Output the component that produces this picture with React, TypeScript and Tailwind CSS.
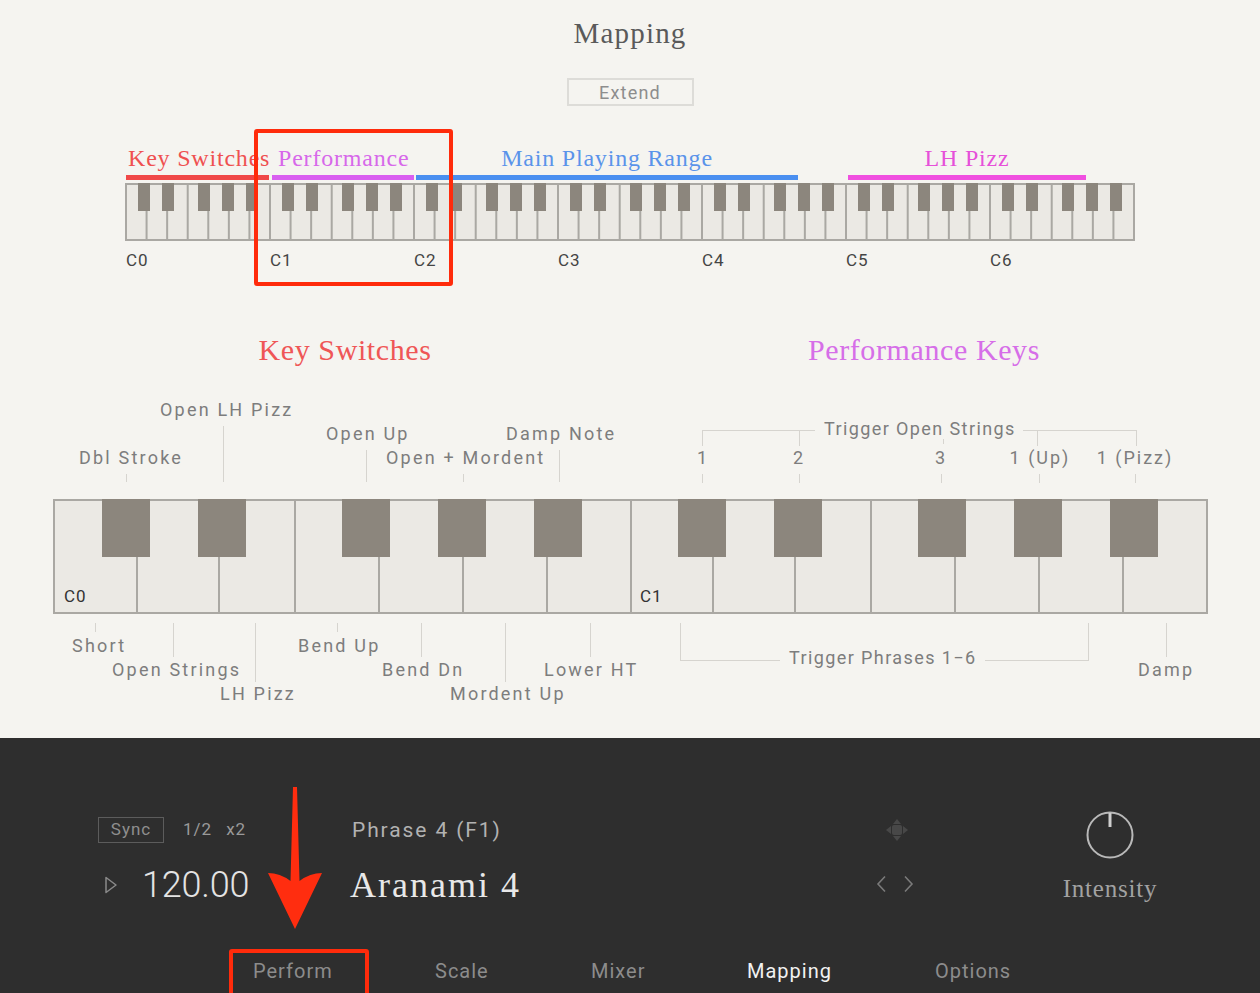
import React from 'react';

// Mapping page of the instrument: two keyboard maps on a light panel, transport/perform strip below.

const SANS = "font-['Roboto',sans-serif]";
const SERIF = "font-['Liberation_Serif',serif]";

// lower diagram origin on the page
const OX = 53;
const OY = 396;

type Label = { t: string; x: number; y: number; wide?: boolean };

const annotations: Label[] = [
  { t: 'Open LH Pizz', x: 160, y: 410, wide: true },
  { t: 'Dbl Stroke', x: 79, y: 458, wide: true },
  { t: 'Open Up', x: 326, y: 434, wide: true },
  { t: 'Damp Note', x: 506, y: 434, wide: true },
  { t: 'Open + Mordent', x: 386, y: 458, wide: true },
  { t: 'Trigger Open Strings', x: 824, y: 429 },
  { t: 'Short', x: 72, y: 646, wide: true },
  { t: 'Open Strings', x: 112, y: 670, wide: true },
  { t: 'LH Pizz', x: 220, y: 694, wide: true },
  { t: 'Bend Up', x: 298, y: 646, wide: true },
  { t: 'Bend Dn', x: 382, y: 670, wide: true },
  { t: 'Mordent Up', x: 450, y: 694, wide: true },
  { t: 'Lower HT', x: 544, y: 670, wide: true },
  { t: 'Trigger Phrases 1−6', x: 789, y: 658 },
  { t: 'Damp', x: 1138, y: 670, wide: true },
];

const numberLabels = [
  { t: '1', c: 703 },
  { t: '2', c: 799 },
  { t: '3', c: 941 },
  { t: '1 (Up)', c: 1040 },
  { t: '1 (Pizz)', c: 1135 },
];

// [x, y1, y2]
const vLines: [number, number, number][] = [
  [126, 474, 482], [223, 426, 482], [366, 450, 482], [463, 474, 482], [559, 450, 482],
  [702, 474, 483], [799, 474, 483], [941, 474, 483], [1039, 474, 483], [1135, 474, 483],
  [943, 439, 444],
  [702, 430, 446], [799, 430, 446], [1037, 430, 446], [1136, 430, 446],
  [95, 623, 632], [173, 623, 657], [255, 623, 682], [337, 623, 632], [421, 623, 657],
  [505, 623, 682], [590, 623, 657], [1166, 623, 657], [680, 623, 660], [1088, 623, 660],
];

// [y, x1, x2]
const hLines: [number, number, number][] = [
  [430, 702, 815], [430, 1023, 1137], [660, 680, 780], [660, 985, 1089],
];

// zones over the overview keyboard
const zones = [
  { name: 'Key Switches', w: 'w-[143px]', ml: 'ml-[1px]', text: 'pl-[2px] text-[#ef5050]', bar: 'bg-[#f04848]' },
  { name: 'Performance', w: 'w-[142px]', ml: 'ml-[3px]', text: 'pl-[6px] text-[#d768ea]', bar: 'bg-[#d95ff0]' },
  { name: 'Main Playing Range', w: 'w-[382px]', ml: 'ml-[2px]', text: 'text-center text-[#5a93ea]', bar: 'bg-[#4a8ff0]' },
  { name: 'LH Pizz', w: 'w-[238px]', ml: 'ml-[50px]', text: 'text-center text-[#e650d9]', bar: 'bg-[#f050e0]' },
];

const tabs = [
  { name: 'Perform', w: 'w-[182px]', active: false },
  { name: 'Scale', w: 'w-[156px]', active: false },
  { name: 'Mixer', w: 'w-[156px]', active: false },
  { name: 'Mapping', w: 'w-[188px]', active: true },
  { name: 'Options', w: 'w-[120px]', active: false },
];

const TopKeyboard = () => {
  const ww = 144 / 7;
  const blacks = [12, 36, 72, 96, 120];
  return (
    <svg width="1012" height="58" className="block">
      <rect x="1" y="1" width="1008" height="56" fill="#ebe9e4" stroke="#aaa8a3" strokeWidth="2" />
      {Array.from({ length: 48 }, (_, i) => (
        <line key={i} x1={1 + (i + 1) * ww} x2={1 + (i + 1) * ww} y1="1" y2="57" stroke="#aaa8a3" strokeWidth="2" />
      ))}
      {Array.from({ length: 7 }, (_, o) =>
        blacks.map((b) => <rect key={`${o}-${b}`} x={1 + o * 144 + b} y="0" width="12" height="28" fill="#8c867d" />)
      )}
    </svg>
  );
};

const BigKeyboard = () => {
  const seps = [137, 219, 295, 379, 463, 547, 631, 713, 795, 871, 955, 1039, 1123];
  const blacks = [102, 198, 342, 438, 534, 678, 774, 918, 1014, 1110];
  return (
    <svg width="1156" height="116" className="block">
      <rect x="1" y="1" width="1153" height="113" fill="#ebe9e4" stroke="#aaa8a3" strokeWidth="2" />
      {seps.map((x) => (
        <line key={x} x1={x - OX} x2={x - OX} y1="1" y2="114" stroke="#aaa8a3" strokeWidth="2" />
      ))}
      {blacks.map((x) => (
        <rect key={x} x={x - OX} y="0" width="48" height="58" fill="#8c867d" />
      ))}
    </svg>
  );
};

export default function App() {
  return (
    <div className="relative h-[993px] w-[1260px] overflow-hidden bg-[#f5f4f0]">
      {/* light mapping panel */}
      <div className="h-[738px] bg-[#f5f4f0] pt-[16px]">
        <div className={`${SERIF} h-[34px] text-center text-[29px] leading-[34px] tracking-[1.2px] text-[#5a5a5a]`}>Mapping</div>
        <div
          className={`${SANS} mx-auto mt-[28px] flex h-[28px] w-[127px] items-center justify-center border-2 border-[#dddcd8] text-[18px] tracking-[1.2px] text-[#8d8d8d]`}
        >
          Extend
        </div>

        {/* overview keyboard */}
        <div className="ml-[125px] mt-[38px] flex w-[1012px] flex-col">
          <div className={`${SERIF} flex text-[24px] leading-[28px] tracking-[0.8px]`}>
            {zones.map((z) => (
              <div key={z.name} className={`${z.w} ${z.ml} flex flex-col`}>
                <span className={`${z.text} whitespace-nowrap`}>{z.name}</span>
                <div className={`mt-[3px] h-[5px] ${z.bar}`} />
              </div>
            ))}
          </div>
          <div className="mt-[3px]">
            <TopKeyboard />
          </div>
          <div className={`${SANS} mt-[9px] flex pl-[1px] text-[17px] leading-[20px] tracking-[1px] text-[#444]`}>
            {['C0', 'C1', 'C2', 'C3', 'C4', 'C5', 'C6'].map((c) => (
              <span key={c} className="w-[144px]">
                {c}
              </span>
            ))}
          </div>
        </div>

        {/* section headings */}
        <div className={`${SERIF} mt-[62px] flex h-[36px] text-[30px] leading-[36px] tracking-[0.6px]`}>
          <div className="w-[690px] text-center text-[#ef5656]">Key Switches</div>
          <div className="w-[468px] text-center text-[#d66ee8]">Performance Keys</div>
        </div>

        {/* detailed keyboard with annotations */}
        <div className={`${SANS} relative ml-[53px] mt-[28px] h-[314px] w-[1160px] text-[18px] leading-[22px] text-[#7d7d7d]`}>
          {annotations.map((l) => (
            <span
              key={l.t}
              className={`absolute whitespace-nowrap ${l.wide ? 'tracking-[2.2px]' : 'tracking-[1.4px]'}`}
              style={{ left: l.x - OX, top: l.y - OY - 11 }}
            >
              {l.t}
            </span>
          ))}
          {numberLabels.map((l) => (
            <span
              key={l.t}
              className="absolute -translate-x-1/2 whitespace-nowrap tracking-[2px]"
              style={{ left: l.c - OX, top: 458 - OY - 11 }}
            >
              {l.t}
            </span>
          ))}
          {vLines.map(([x, y1, y2], i) => (
            <div key={`v${i}`} className="absolute w-px bg-[#d6d4cf]" style={{ left: x - OX, top: y1 - OY, height: y2 - y1 }} />
          ))}
          {hLines.map(([y, x1, x2], i) => (
            <div key={`h${i}`} className="absolute h-px bg-[#d6d4cf]" style={{ left: x1 - OX, top: y - OY, width: x2 - x1 }} />
          ))}

          <div className="absolute left-0 top-[103px]">
            <BigKeyboard />
          </div>
          <span className="absolute left-[11px] top-[190px] text-[17px] leading-[20px] tracking-[1px] text-[#333]">C0</span>
          <span className="absolute left-[587px] top-[190px] text-[17px] leading-[20px] tracking-[1px] text-[#333]">C1</span>
        </div>
      </div>

      {/* dark perform strip */}
      <div className={`${SANS} flex h-[255px] flex-col bg-[#2e2e2e]`}>
        <div className="flex pt-[74px]">
          <div className="ml-[98px] w-[252px] pt-[5px]">
            <div className="flex h-[26px] items-center text-[17px] tracking-[1px] text-[#9a9a9a]">
              <span className="flex h-[26px] w-[66px] items-center justify-center border border-[#5c5c5c] text-[#8e8e8e]">Sync</span>
              <span className="ml-[19px]">1/2</span>
              <span className="ml-[14px]">x2</span>
            </div>
            <div className="mt-[20px] flex h-[44px] items-center">
              <svg width="14" height="18" viewBox="0 0 14 18" className="ml-[6px]">
                <path d="M2 1.5 L12 9 L2 16.5 Z" fill="none" stroke="#8a8a8a" strokeWidth="1.5" strokeLinejoin="round" />
              </svg>
              <span className="ml-[24px] text-[36px] font-light leading-[44px] tracking-[-0.2px] text-[#e4e4e4]">120.00</span>
            </div>
          </div>

          <div className="w-[480px] pt-[5px]">
            <div className="ml-[2px] h-[26px] text-[21px] leading-[26px] tracking-[1.9px] text-[#b2b2b2]">Phrase 4 (F1)</div>
            <div className={`${SERIF} mt-[20px] h-[44px] text-[36px] leading-[44px] tracking-[2px] text-[#e8e8e8]`}>Aranami 4</div>
          </div>

          <div className="flex w-[134px] flex-col items-center pt-[5px]">
            <svg width="26" height="26" viewBox="0 0 26 26">
              <g fill="#484848">
                <rect x="8" y="8" width="10" height="10" rx="2" />
                <path d="M13 2 L9 7 L17 7 Z" />
                <path d="M13 24 L9 19 L17 19 Z" />
                <path d="M2 13 L7 9 L7 17 Z" />
                <path d="M24 13 L19 9 L19 17 Z" />
              </g>
            </svg>
            <svg width="44" height="18" viewBox="0 0 44 18" className="mt-[32px]">
              <g fill="none" stroke="#7a7a7a" strokeWidth="1.6">
                <path d="M10 1.5 L3 9 L10 16.5" />
                <path d="M30 1.5 L37 9 L30 16.5" />
              </g>
            </svg>
          </div>

          <div className="flex w-[292px] flex-col items-center">
            <svg width="48" height="48" viewBox="0 0 48 48" className="-mt-[1px]">
              <circle cx="24" cy="24" r="22.5" fill="none" stroke="#b9b9b9" strokeWidth="2" />
              <line x1="24" y1="2" x2="24" y2="16" stroke="#cfcfcf" strokeWidth="3" />
            </svg>
            <div className={`${SERIF} mt-[15px] text-[25px] leading-[30px] tracking-[0.8px] text-[#a2a2a2]`}>Intensity</div>
          </div>
        </div>

        <div className="mb-[8px] mt-auto flex h-[28px] items-center pl-[253px] text-[20px] leading-[28px] tracking-[1px]">
          {tabs.map((t) => (
            <span key={t.name} className={`${t.w} ${t.active ? 'text-[#f2f2f2]' : 'text-[#8c8c8c]'}`}>
              {t.name}
            </span>
          ))}
        </div>
      </div>

      {/* red call-outs */}
      <div className="absolute left-[254px] top-[129px] h-[157px] w-[199px] rounded-[3px] border-4 border-[#ff2b0b]" />
      <div className="absolute left-[229px] top-[949px] h-[50px] w-[140px] rounded-[3px] border-4 border-[#ff2b0b]" />
      <svg width="66" height="150" viewBox="0 0 66 150" className="absolute left-[262px] top-[782px]">
        <path d="M31 5 L35 5 L37.5 99 Q48 91 60 91 L33 147 L6 91 Q18 91 28.5 99 Z" fill="#ff2d0f" />
      </svg>
    </div>
  );
}
